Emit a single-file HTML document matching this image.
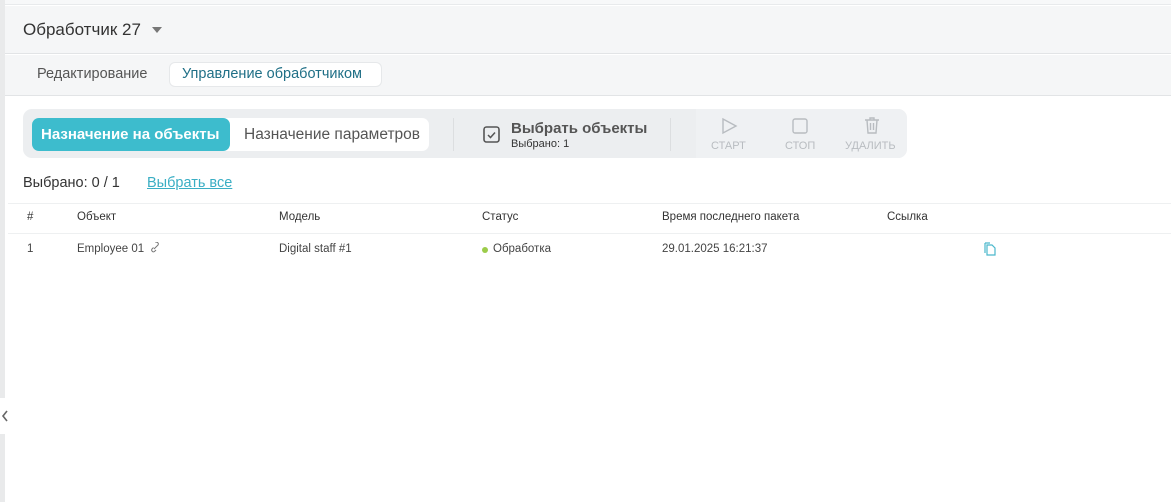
<!DOCTYPE html>
<html><head><meta charset="utf-8"><style>
*{margin:0;padding:0;box-sizing:border-box}
body{width:1171px;height:502px;overflow:hidden;background:#fff;font-family:"Liberation Sans","DejaVu Sans",sans-serif;color:#333;position:relative}
.abs{position:absolute}
</style></head><body>
<div class="abs" style="left:0;top:0;width:1171px;height:5px;background:#f7f8f9;border-bottom:1px solid #e8eaec"></div>
<div class="abs" style="left:0;top:0;width:5px;height:502px;background:#e9eaeb"></div>
<div class="abs" style="left:5px;top:6px;width:1166px;height:48px;background:#f5f6f7;border-bottom:1px solid #e2e4e6"></div>
<div class="abs" style="left:23px;top:20px;font-size:17px;color:#333">Обработчик 27</div>
<svg class="abs" style="left:152px;top:27px" width="10" height="7"><path d="M0 0h10L5 6z" fill="#777"/></svg>
<div class="abs" style="left:5px;top:55px;width:1166px;height:41px;background:#f5f6f7;border-bottom:1px solid #e2e4e6"></div>
<div class="abs" style="left:37px;top:66px;font-size:14.5px;color:#555">Редактирование</div>
<div class="abs" style="left:169px;top:62px;width:213px;height:25px;background:#fff;border-radius:6px;border:1px solid #e6e8ea"></div>
<div class="abs" style="left:182px;top:66px;font-size:14.5px;color:#1f6f86">Управление обработчиком</div>

<div class="abs" style="left:23px;top:109px;width:884px;height:49px;background:#eceef0;border-radius:9px"></div>
<div class="abs" style="left:696px;top:109px;width:211px;height:49px;background:#eff1f3;border-radius:0 9px 9px 0"></div>
<div class="abs" style="left:32px;top:118px;width:397px;height:33px;background:#fff;border-radius:7px"></div>
<div class="abs" style="left:32px;top:118px;width:198px;height:33px;background:#3dbccd;border-radius:7px"></div>
<div class="abs" style="left:41px;top:126px;font-size:15px;font-weight:bold;color:#fff">Назначение на объекты</div>
<div class="abs" style="left:244px;top:126px;font-size:15.5px;color:#555">Назначение параметров</div>
<div class="abs" style="left:453px;top:118px;width:1px;height:33px;background:#dcdee0"></div>
<div class="abs" style="left:670px;top:118px;width:1px;height:33px;background:#dcdee0"></div>
<svg class="abs" style="left:483px;top:126px" width="18" height="18"><rect x="1" y="1" width="15" height="15" rx="2.5" fill="none" stroke="#555" stroke-width="1.6"/><path d="M5 9l2.5 2.5L12 6.5" fill="none" stroke="#555" stroke-width="1.5"/></svg>
<div class="abs" style="left:511px;top:120px;font-size:15px;font-weight:bold;color:#555">Выбрать объекты</div>
<div class="abs" style="left:511px;top:138px;font-size:11px;color:#333">Выбрано: 1</div>
<svg class="abs" style="left:720px;top:117px" width="18" height="18"><path d="M3 2L16 9L3 16z" fill="none" stroke="#b8bcc0" stroke-width="1.4"/></svg>
<div class="abs" style="left:711px;top:140px;font-size:11px;color:#b8bcc0">СТАРТ</div>
<svg class="abs" style="left:791px;top:117px" width="18" height="18"><rect x="2" y="2" width="14" height="14" rx="2" fill="none" stroke="#b8bcc0" stroke-width="1.4"/></svg>
<div class="abs" style="left:785px;top:140px;font-size:11px;color:#b8bcc0">СТОП</div>
<svg class="abs" style="left:863px;top:116px" width="18" height="19"><path d="M2 4h14M7 4V2h4v2M4 4l1 13h8l1-13M7.5 7v7M10.5 7v7" fill="none" stroke="#b8bcc0" stroke-width="1.4"/></svg>
<div class="abs" style="left:845px;top:140px;font-size:11px;color:#b8bcc0">УДАЛИТЬ</div>

<div class="abs" style="left:23px;top:175px;font-size:14.5px;color:#333">Выбрано: 0 / 1</div>
<div class="abs" style="left:147px;top:175px;font-size:14.5px;color:#3aaec4;text-decoration:underline">Выбрать все</div>

<div class="abs" style="left:8px;top:203px;width:1163px;height:1px;background:#eef0f1"></div>
<div class="abs" style="left:8px;top:233px;width:1163px;height:1px;background:#eef0f1"></div>
<div style="font-size:11.5px;color:#333">
<div class="abs" style="left:27px;top:211px">#</div>
<div class="abs" style="left:77px;top:211px">Объект</div>
<div class="abs" style="left:279px;top:211px">Модель</div>
<div class="abs" style="left:482px;top:211px">Статус</div>
<div class="abs" style="left:662px;top:211px">Время последнего пакета</div>
<div class="abs" style="left:887px;top:211px">Ссылка</div>
<div class="abs" style="left:27px;top:243px;color:#444">1</div>
<div class="abs" style="left:77px;top:243px;color:#444">Employee 01</div>
<svg class="abs" style="left:149px;top:242px" width="12" height="12"><path d="M5 7l3-3M4.5 5.5L3 7a1.8 1.8 0 0 0 2.5 2.5L7 8M7.5 4.5L9 3a1.8 1.8 0 0 0-2.5-2.5" fill="none" stroke="#777" stroke-width="1"/></svg>
<div class="abs" style="left:279px;top:243px;color:#444">Digital staff #1</div>
<div class="abs" style="left:482px;top:247px;width:6px;height:6px;border-radius:50%;background:#9ccc4a"></div>
<div class="abs" style="left:493px;top:243px;color:#444">Обработка</div>
<div class="abs" style="left:662px;top:243px;color:#444">29.01.2025 16:21:37</div>
</div>
<svg class="abs" style="left:984px;top:242px" width="13" height="14"><path d="M3 3h5l3 3v7H3z M1 1h5M1 1v10" fill="none" stroke="#4bb8cc" stroke-width="1.2"/></svg>
<div class="abs" style="left:0;top:398px;width:16px;height:36px;background:#fff;border-radius:0 4px 4px 0"></div>
<svg class="abs" style="left:1px;top:410px" width="8" height="12"><path d="M6 1L2 6l4 5" fill="none" stroke="#666" stroke-width="1.6"/></svg>
</body></html>
